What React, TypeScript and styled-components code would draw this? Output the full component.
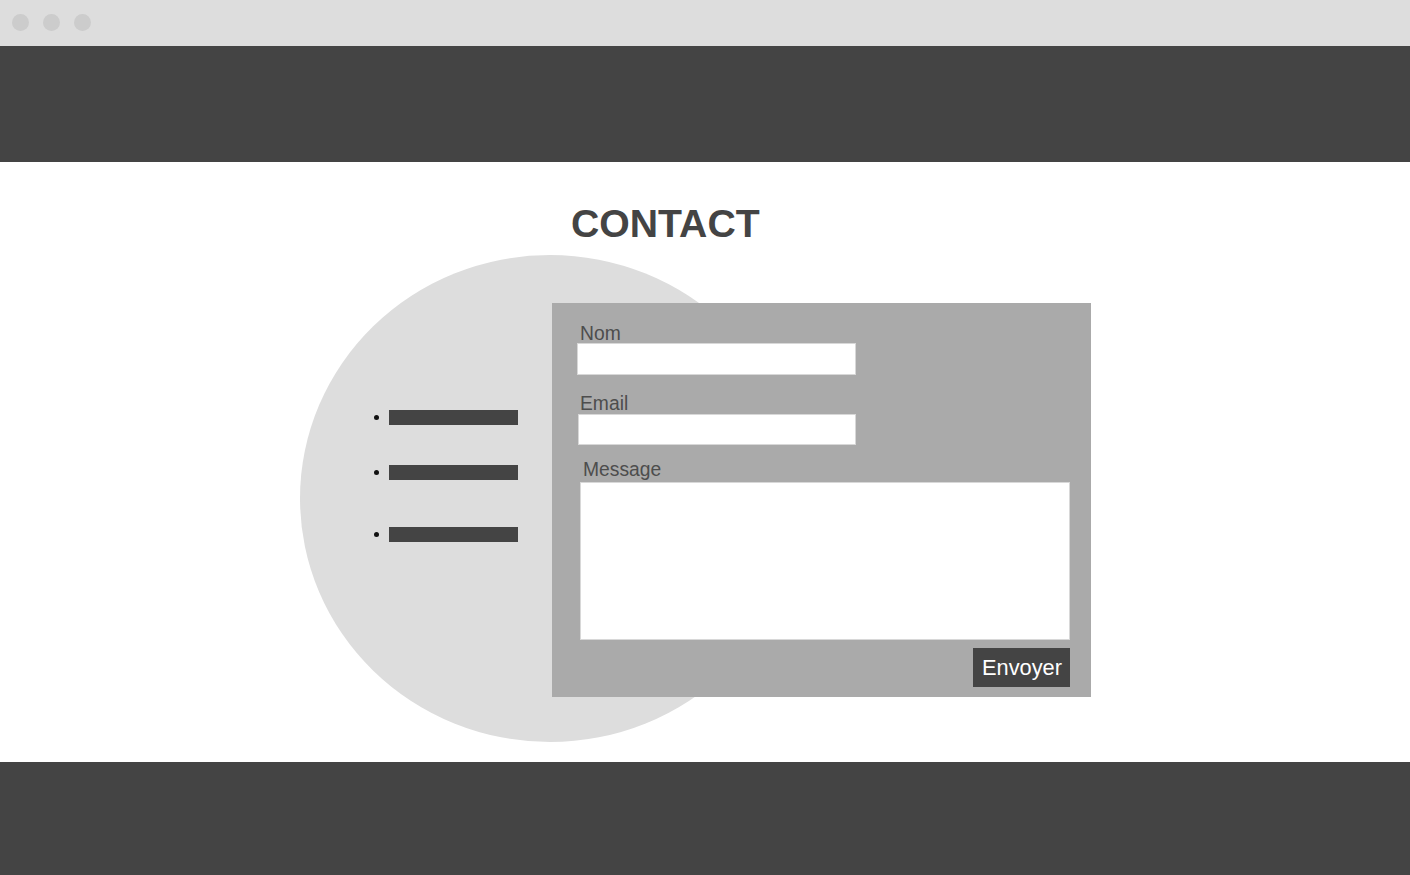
import styled, { createGlobalStyle } from 'styled-components'

const GlobalStyle = createGlobalStyle`
  * {
    box-sizing: border-box;
  }
  body {
    margin: 0;
    font-family: 'Liberation Sans', Arial, sans-serif;
    background: #fff;
  }
`

/* browser chrome */
const BrowserBar = styled.div`
  height: 46px;
  background: #dddddd;
  display: flex;
  align-items: center;
  gap: 14px;
  padding: 0 0 1px 12px;
`

const Dot = styled.span`
  width: 17px;
  height: 17px;
  border-radius: 50%;
  background: #cccccc;
`

const DarkBand = styled.div<{ $height: number }>`
  height: ${(p) => p.$height}px;
  background: #444444;
`

/* main */
const Main = styled.main`
  height: 600px;
  padding: 37px 0 0 300px;
`

const Title = styled.h1`
  margin: 0 0 10px 271px;
  height: 46px;
  line-height: 50px;
  font-size: 39.2px;
  font-weight: 700;
  color: #444444;
`

const Stage = styled.div`
  display: grid;
  grid-template-columns: 252px 248px 291px;
  grid-template-rows: 48px 394px 45px;
`

const Circle = styled.div`
  grid-column: 1 / 3;
  grid-row: 1 / 4;
  border-radius: 50%;
  background: #dddddd;
  padding: 155px 0 0 74px;
`

const BulletList = styled.ul`
  list-style: none;
  margin: 0;
  padding: 0;
`

const Bullet = styled.li<{ $top: number }>`
  display: flex;
  align-items: center;
  gap: 10px;
  margin-top: ${(p) => p.$top}px;

  &::before {
    content: '';
    width: 5px;
    height: 5px;
    border-radius: 50%;
    background: #111;
  }
`

const Bar = styled.span`
  width: 129px;
  height: 15px;
  background: #444444;
`

const Form = styled.form`
  grid-column: 2 / 4;
  grid-row: 2 / 3;
  position: relative;
  background: #aaaaaa;
  padding: 18px 21px 10px 25px;
  display: flex;
  flex-direction: column;
`

const Label = styled.label<{ $indent: number; $gap: number }>`
  display: block;
  height: 22px;
  margin: ${(p) => p.$gap}px 0 0 ${(p) => p.$indent}px;
  font-size: 19.3px;
  line-height: 26px;
  color: #4d4d4d;
`

const TextInput = styled.input<{ $indent: number; $h: number }>`
  display: block;
  width: ${(p) => 279 - p.$indent}px;
  height: ${(p) => p.$h}px;
  margin-left: ${(p) => p.$indent}px;
  border: 1px solid #d8d8d8;
  background: #fff;
  padding: 0;
`

const MessageArea = styled.textarea`
  display: block;
  width: 490px;
  height: 158px;
  margin: 3px 0 0 3px;
  border: 1px solid #d8d8d8;
  background: #fff;
  resize: none;
  padding: 0;
`

const SendButton = styled.button`
  align-self: flex-end;
  margin-top: 8px;
  height: 39px;
  padding: 0 8px 0 9px;
  border: none;
  background: #444444;
  color: #fff;
  font-family: 'Liberation Sans', Arial, sans-serif;
  font-size: 21.8px;
`

export default function App() {
  return (
    <>
      <GlobalStyle />
      <BrowserBar>
        <Dot />
        <Dot />
        <Dot />
      </BrowserBar>
      <DarkBand $height={116} />
      <Main>
        <Title>CONTACT</Title>
        <Stage>
          <Circle>
            <BulletList>
              <Bullet $top={0}>
                <Bar />
              </Bullet>
              <Bullet $top={40}>
                <Bar />
              </Bullet>
              <Bullet $top={47}>
                <Bar />
              </Bullet>
            </BulletList>
          </Circle>
          <Form onSubmit={(e) => e.preventDefault()}>
            <Label $indent={3} $gap={0}>Nom</Label>
            <TextInput $indent={0} $h={32} />
            <Label $indent={3} $gap={16}>Email</Label>
            <TextInput $indent={1} $h={31} style={{ marginTop: 1 }} />
            <Label $indent={6} $gap={12}>Message</Label>
            <MessageArea />
            <SendButton type="submit">Envoyer</SendButton>
          </Form>
        </Stage>
      </Main>
      <DarkBand $height={113} />
    </>
  )
}
